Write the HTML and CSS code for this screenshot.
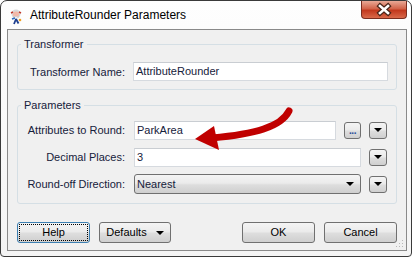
FILE: index.html
```html
<html>
<head>
<title>AttributeRounder Parameters</title>
<link rel="stylesheet" href="styles.css">
</head>
<body>
<div class="window">
  <div class="titlebar">
    <svg class="app-icon" width="16" height="16" viewBox="0 0 16 16">
      <circle cx="8" cy="5" r="4.5" fill="#d8d8d8"/>
      <circle cx="8" cy="5.5" r="3" fill="#f3b9a8"/>
      <path d="M3 4 L5 3 M13 4 L11 3" stroke="#c0392b" stroke-width="1.6"/>
      <path d="M5.5 7.5 Q8 11 10.5 7.5 Z" fill="#ffffff" stroke="#bbbbbb" stroke-width="0.5"/>
      <path d="M8 10 L6 15 M8 10 L10.5 14.5" stroke="#1f3f8f" stroke-width="1.8"/>
      <path d="M4 10 L7 9" stroke="#2d6cc0" stroke-width="1.4"/>
      <circle cx="12" cy="11" r="1.3" fill="#f0a020"/>
    </svg>
    <div class="title">AttributeRounder Parameters</div>
    <div class="close-btn">
      <svg width="46" height="18" viewBox="0 0 46 18">
        <path d="M19 5 L27 12 M27 5 L19 12" stroke="#4a2418" stroke-width="5" stroke-linecap="square"/>
        <path d="M19 5 L27 12 M27 5 L19 12" stroke="#ffffff" stroke-width="2.6" stroke-linecap="square"/>
      </svg>
    </div>
  </div>

  <div class="client">
    <fieldset class="group group-first">
      <legend>Transformer</legend>
      <div class="form-row">
        <div class="label">Transformer Name:</div>
        <div class="field">AttributeRounder</div>
      </div>
    </fieldset>

    <fieldset class="group group-params">
      <legend>Parameters</legend>
      <div class="param-grid">
        <div class="label">Attributes to Round:</div>
        <div class="field">ParkArea</div>
        <div class="small-btn dots-btn"><span class="dots">...</span></div>
        <div class="small-btn"><span class="tri"></span></div>

        <div class="label">Decimal Places:</div>
        <div class="field span2">3</div>
        <div class="small-btn"><span class="tri"></span></div>

        <div class="label">Round-off Direction:</div>
        <div class="combo span2"><span>Nearest</span><span class="tri"></span></div>
        <div class="small-btn"><span class="tri"></span></div>
      </div>
    </fieldset>

    <div class="button-row">
      <div class="btn btn-focus">Help</div>
      <div class="btn btn-defaults">Defaults <span class="tri"></span></div>
      <div class="spacer"></div>
      <div class="btn">OK</div>
      <div class="btn">Cancel</div>
    </div>

    <svg class="grip" width="8" height="8" viewBox="0 0 8 8">
      <rect x="6" y="0" width="1" height="1" fill="#b8b8b8"/>
      <rect x="3" y="3" width="1" height="1" fill="#b8b8b8"/>
      <rect x="6" y="3" width="1" height="1" fill="#b8b8b8"/>
      <rect x="0" y="6" width="1" height="1" fill="#b8b8b8"/>
      <rect x="3" y="6" width="1" height="1" fill="#b8b8b8"/>
      <rect x="6" y="6" width="1" height="1" fill="#b8b8b8"/>
    </svg>
  </div>
</div>

<svg class="callout" width="414" height="260" viewBox="0 0 414 260">
  <path d="M289 111 C281 127 255 134 212 138" fill="none" stroke="#c00000" stroke-width="7" stroke-linecap="round"/>
  <polygon points="195,139 214,126 219,150" fill="#c00000"/>
</svg>
</body>
</html>
```

FILE: styles.css
```css
body {
    margin: 0;
    width: 414px;
    height: 260px;
    overflow: hidden;
    position: relative;
    background: #ffffff;
    font-family: "Liberation Sans", Arial, sans-serif;
    font-size: 11px;
    color: #16213b;
}

.window {
    width: 410px;
    height: 255px;
    border: 1px solid #3a3a3a;
    border-radius: 7px 7px 4px 4px;
    background: linear-gradient(#fefefe, #f4f4f4);
    display: flex;
    flex-direction: column;
}

.titlebar {
    height: 28px;
    display: flex;
    align-items: flex-start;
    flex: none;
}

.app-icon {
    margin: 8px 0 0 7px;
}

.title {
    margin: 7px 0 0 6px;
    font-size: 12px;
    line-height: 15px;
    color: #000000;
}

.close-btn {
    margin-left: auto;
    margin-right: 4px;
    width: 44px;
    height: 17px;
    border: 1px solid #7a2d1f;
    border-top: none;
    border-radius: 0 0 4px 4px;
    background: linear-gradient(#e9a996, #d2644a 45%, #c2381d 55%, #d9694a);
}

.close-btn svg {
    display: block;
    margin-left: -1px;
}

.client {
    margin: 0 4px 0 6px;
    height: 220px;
    border: 1px solid #8a8a8a;
    background: #f0f0f0;
    padding: 0 9px;
    position: relative;
}

.group {
    margin: 8px 0 0 0;
    border: 1px solid #d5dfe5;
    border-radius: 3px;
    padding: 8px 9px 9px 0;
    min-width: 0;
}

.group-first {
    margin-top: 7px;
    padding: 11px 8px 8px 0;
}

.group legend {
    margin-left: 3px;
    padding: 0 3px;
    line-height: 14px;
    font-size: 11px;
}

.form-row {
    display: grid;
    grid-template-columns: 107px 1fr;
    column-gap: 7px;
    align-items: center;
}

.param-grid {
    display: grid;
    grid-template-columns: 107px 1fr 17px 18px;
    grid-auto-rows: 20px;
    column-gap: 8px;
    row-gap: 7px;
    align-items: center;
}

.label {
    text-align: right;
    white-space: nowrap;
}

.field {
    height: 19px;
    box-sizing: border-box;
    border: 1px solid #d6dadf;
    border-top-color: #c9cdd2;
    background: #ffffff;
    padding: 0 2px;
    line-height: 17px;
    margin-left: 1px;
}

.span2 {
    grid-column: span 2;
}

.combo {
    height: 20px;
    box-sizing: border-box;
    border: 1px solid #707070;
    border-radius: 3px;
    background: linear-gradient(#f4f4f4, #ebebeb 45%, #dddddd 55%, #cfcfcf);
    padding: 0 6px 0 2px;
    line-height: 18px;
    margin-left: 1px;
    display: flex;
    align-items: center;
    justify-content: space-between;
}

.small-btn {
    height: 17px;
    box-sizing: border-box;
    border: 1px solid #707070;
    border-radius: 3px;
    background: linear-gradient(#f4f4f4, #ebebeb 45%, #dddddd 55%, #cfcfcf);
    display: flex;
    align-items: center;
    justify-content: center;
}

.dots-btn {
    align-items: flex-end;
}

.dots {
    font-size: 10px;
    line-height: 10px;
    font-weight: bold;
    color: #2a4d9a;
    letter-spacing: -0.5px;
    padding-bottom: 2px;
}

.tri {
    display: inline-block;
    width: 0;
    height: 0;
    border-left: 4px solid transparent;
    border-right: 4px solid transparent;
    border-top: 4px solid #000000;
}

.button-row {
    margin-top: 18px;
    display: flex;
    gap: 9px;
}

.spacer {
    flex: 1;
}

.btn {
    width: 73px;
    height: 21px;
    box-sizing: border-box;
    border: 1px solid #707070;
    border-radius: 3px;
    background: linear-gradient(#f4f4f4, #ebebeb 45%, #dddddd 55%, #cfcfcf);
    text-align: center;
    line-height: 19px;
    color: #000000;
}

.btn-focus {
    border-color: #3c7fb1;
    outline: 1px dotted #000000;
    outline-offset: -3px;
}

.btn-defaults {
    width: 72px;
}

.btn-defaults .tri {
    margin-left: 6px;
    vertical-align: 1px;
}

.grip {
    position: absolute;
    right: 2px;
    bottom: 2px;
}

.callout {
    position: absolute;
    left: 0;
    top: 0;
    pointer-events: none;
}
```
